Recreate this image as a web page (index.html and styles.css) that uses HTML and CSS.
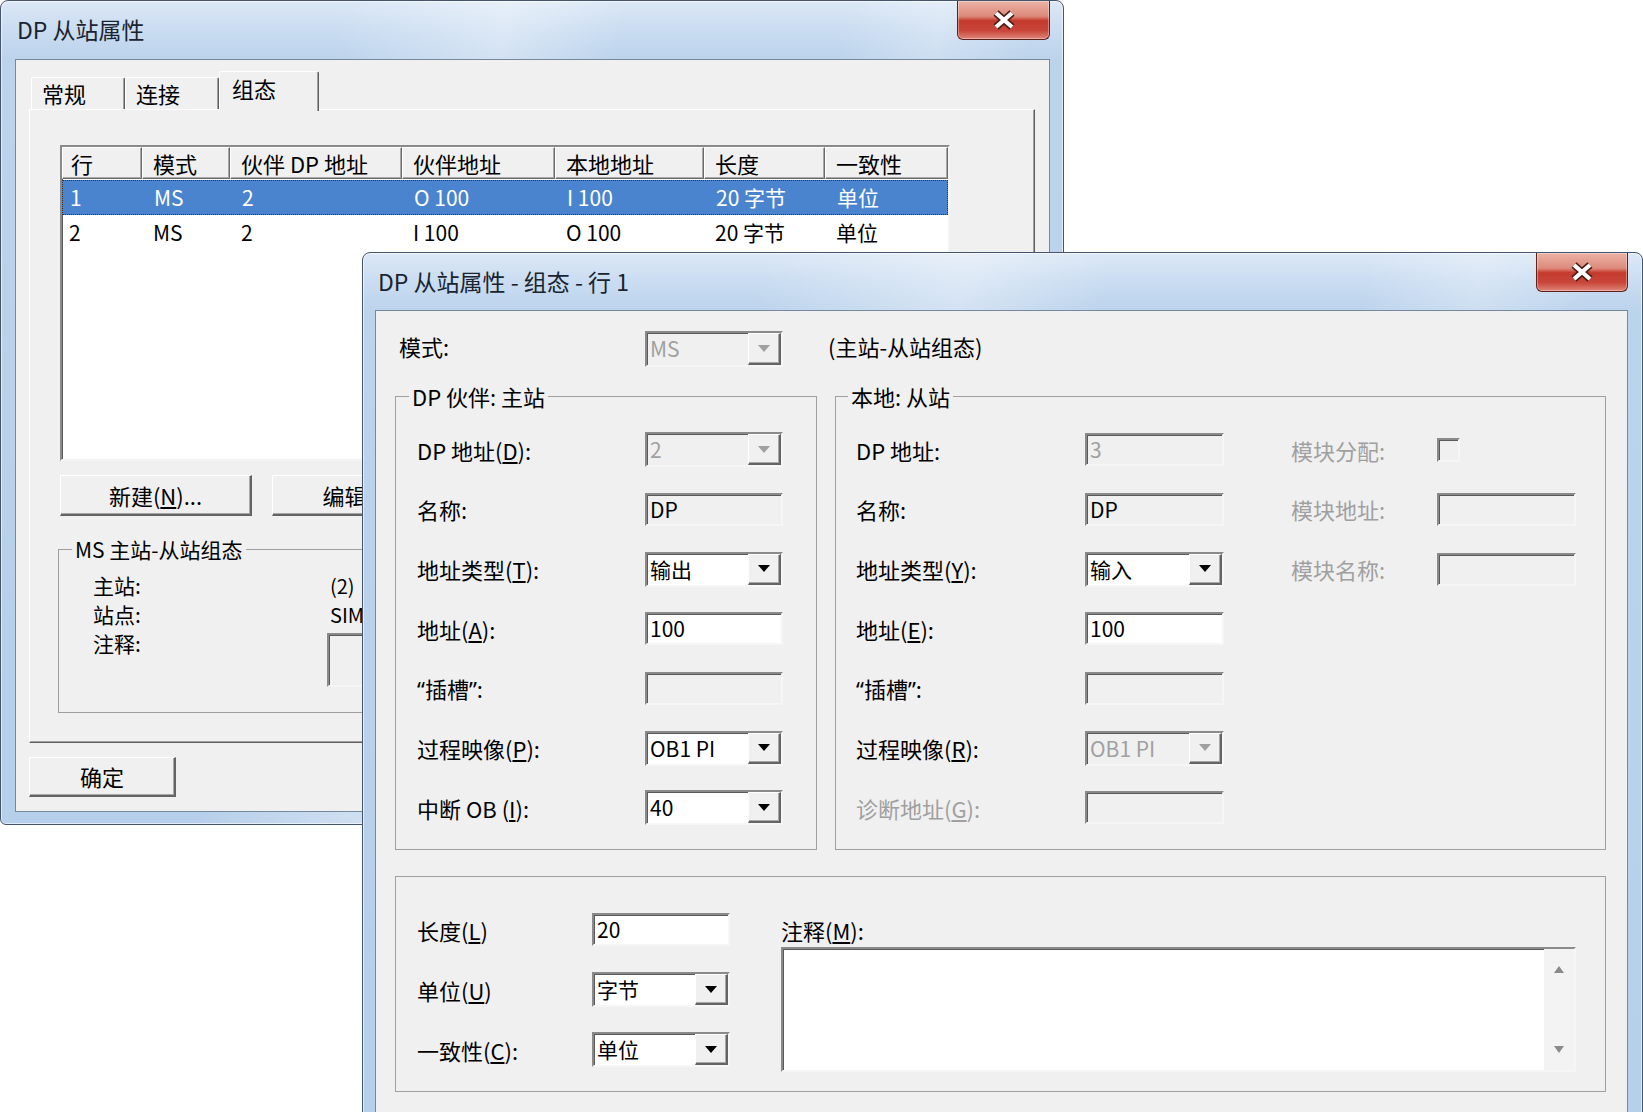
FILE: index.html
```html
<!DOCTYPE html>
<html lang="zh-CN">
<head>
<meta charset="utf-8">
<title>DP 从站属性</title>
<link rel="stylesheet" href="styles.css">
</head>
<body>
<div class="win win1">
  <div class="titlebar">
    <span class="title t1">DP 从站属性</span>
    <div class="close"><svg width="26" height="20" viewBox="0 0 26 20"><path d="M5 3 L21 17 M21 3 L5 17" stroke="#4a1d18" stroke-width="7.5" fill="none"/><path d="M5 3 L21 17 M21 3 L5 17" stroke="#ffffff" stroke-width="4.2" fill="none"/></svg></div>
  </div>
  <div class="client c1">
    <div class="tabs">
      <div class="tab">常规</div>
      <div class="tab">连接</div>
      <div class="tab active">组态</div>
    </div>
    <div class="tabpanel">
      <div class="list">
        <div class="lrow lhead">
          <div class="hc">行</div><div class="hc">模式</div><div class="hc">伙伴 DP 地址</div><div class="hc">伙伴地址</div><div class="hc">本地地址</div><div class="hc">长度</div><div class="hc">一致性</div>
        </div>
        <div class="lrow sel">
          <div class="lc">1</div><div class="lc">MS</div><div class="lc">2</div><div class="lc">O 100</div><div class="lc">I 100</div><div class="lc">20 字节</div><div class="lc">单位</div>
        </div>
        <div class="lrow">
          <div class="lc">2</div><div class="lc">MS</div><div class="lc">2</div><div class="lc">I 100</div><div class="lc">O 100</div><div class="lc">20 字节</div><div class="lc">单位</div>
        </div>
      </div>
      <div class="btnrow">
        <div class="btn wide">新建(<u>N</u>)...</div>
        <div class="btn wide">编辑(<u>E</u>)...</div>
        <div class="btn wide">删除(<u>D</u>)</div>
      </div>
      <fieldset class="grp grp-ms">
        <legend>MS 主站-从站组态</legend>
        <div class="msgrid">
          <span>主站:</span><span class="msval">(2)</span>
          <span>站点:</span><span class="msval">SIM</span>
          <span>注释:</span><div class="field dis note"></div>
        </div>
      </fieldset>
    </div>
    <div class="okrow"><div class="btn ok">确定</div></div>
  </div>
</div>

<div class="win win2">
  <div class="titlebar">
    <span class="title t2">DP 从站属性 - 组态 - 行 1</span>
    <div class="close"><svg width="26" height="20" viewBox="0 0 26 20"><path d="M5 3 L21 17 M21 3 L5 17" stroke="#4a1d18" stroke-width="7.5" fill="none"/><path d="M5 3 L21 17 M21 3 L5 17" stroke="#ffffff" stroke-width="4.2" fill="none"/></svg></div>
  </div>
  <div class="client c2">
    <div class="moderow">
      <span class="modelbl">模式:</span>
      <div class="combo dis"><span class="val">MS</span><span class="dd"><i class="tri"></i></span></div>
      <span class="modenote">(主站-从站组态)</span>
    </div>
    <div class="groups">
      <fieldset class="grp g1">
        <legend>DP 伙伴: 主站</legend>
        <div class="fgrid g1grid">
          <span class="lbl">DP 地址(<u>D</u>):</span>
          <div class="combo dis"><span class="val">2</span><span class="dd"><i class="tri"></i></span></div>
          <span class="lbl">名称:</span>
          <div class="field ro">DP</div>
          <span class="lbl">地址类型(<u>T</u>):</span>
          <div class="combo"><span class="val">输出</span><span class="dd"><i class="tri"></i></span></div>
          <span class="lbl">地址(<u>A</u>):</span>
          <div class="field">100</div>
          <span class="lbl"><span class="q">“</span>插槽<span class="q">”</span>:</span>
          <div class="field dis"></div>
          <span class="lbl">过程映像(<u>P</u>):</span>
          <div class="combo"><span class="val">OB1 PI</span><span class="dd"><i class="tri"></i></span></div>
          <span class="lbl">中断 OB (<u>I</u>):</span>
          <div class="combo"><span class="val">40</span><span class="dd"><i class="tri"></i></span></div>
        </div>
      </fieldset>
      <fieldset class="grp g2">
        <legend>本地: 从站</legend>
        <div class="fgrid g2grid">
          <span class="lbl">DP 地址:</span>
          <div class="field dis">3</div>
          <span class="lbl gray side">模块分配:</span>
          <div class="check"></div>

          <span class="lbl">名称:</span>
          <div class="field ro">DP</div>
          <span class="lbl gray side">模块地址:</span>
          <div class="field dis"></div>

          <span class="lbl">地址类型(<u>Y</u>):</span>
          <div class="combo"><span class="val">输入</span><span class="dd"><i class="tri"></i></span></div>
          <span class="lbl gray side">模块名称:</span>
          <div class="field dis"></div>

          <span class="lbl">地址(<u>E</u>):</span>
          <div class="field">100</div>
          <span></span><span></span>

          <span class="lbl"><span class="q">“</span>插槽<span class="q">”</span>:</span>
          <div class="field dis"></div>
          <span></span><span></span>

          <span class="lbl">过程映像(<u>R</u>):</span>
          <div class="combo dis"><span class="val">OB1 PI</span><span class="dd"><i class="tri"></i></span></div>
          <span></span><span></span>

          <span class="lbl gray">诊断地址(<u>G</u>):</span>
          <div class="field dis"></div>
          <span></span><span></span>
        </div>
      </fieldset>
    </div>
    <div class="grp3">
      <span class="lbl r1">长度(<u>L</u>)</span>
      <div class="field r1c">20</div>
      <span class="lbl r2">单位(<u>U</u>)</span>
      <div class="combo r2c"><span class="val">字节</span><span class="dd"><i class="tri"></i></span></div>
      <span class="lbl r3">一致性(<u>C</u>):</span>
      <div class="combo r3c"><span class="val">单位</span><span class="dd"><i class="tri"></i></span></div>
      <div class="notecol">
        <span class="notelbl">注释(<u>M</u>):</span>
        <div class="ta"><div class="sb"><i class="sup"></i><i class="sdn"></i></div></div>
      </div>
    </div>
  </div>
</div>
</body>
</html>
```

FILE: styles.css
```css
html, body {
  margin: 0;
  padding: 0;
  width: 1643px;
  height: 1112px;
  overflow: hidden;
  background: #ffffff;
}
body {
  position: relative;
  font-family: "Noto Sans CJK SC", "Noto Sans", sans-serif;
  font-size: 22px;
  line-height: 1.2;
  color: #000;
}
u { text-decoration: underline; text-underline-offset: 2px; }
.q { font-family: "Noto Sans", "DejaVu Sans", sans-serif; }

/* ---------- windows ---------- */
.win {
  position: absolute;
  box-sizing: border-box;
  border: 1px solid #44546a;
  border-radius: 8px 8px 6px 6px;
  background:
    linear-gradient(100deg, rgba(255,255,255,0) 28%, rgba(255,255,255,.35) 42%, rgba(255,255,255,0) 52%, rgba(255,255,255,0) 70%, rgba(255,255,255,.25) 78%, rgba(255,255,255,0) 86%),
    linear-gradient(180deg, #dce8f6 0, #c9dcf1 30px, #bcd3ec 58px, #b6cfea 100%);
  box-shadow: inset 0 0 0 1px rgba(255,255,255,.6);
  display: flex;
  flex-direction: column;
}
.win1 { left: 0; top: 0; width: 1064px; height: 825px; padding: 0 13px 12px 14px; z-index: 1; }
.win2 { left: 362px; top: 252px; width: 1281px; height: 900px; padding: 0 14px 0 12px; z-index: 2; }

.titlebar { height: 58px; flex: none; display: flex; }
.win2 .titlebar { height: 57px; }
.title {
  align-self: center;
  font-size: 23px;
  color: #1a2430;
  white-space: nowrap;
}
.t1 { margin-left: 2px; margin-top: -1px; }
.t2 { margin-left: 3px; margin-top: 1px; }

.close {
  margin-left: auto;
  align-self: flex-start;
  width: 93px;
  height: 39px;
  box-sizing: border-box;
  border: 1px solid #5e2019;
  border-top: none;
  border-radius: 0 0 6px 6px;
  background: linear-gradient(180deg, #eab3a6 0%, #dd8a7b 40%, #c43a2c 52%, #c9463a 78%, #e0857a 100%);
  box-shadow: inset 0 0 0 1px rgba(255,255,255,.35);
  display: flex;
  align-items: center;
  justify-content: center;
}
.win2 .close { width: 92px; }

.client {
  flex: 1;
  box-sizing: border-box;
  background: #f0f0f0;
  border: 1px solid #76889c;
  display: flex;
  flex-direction: column;
  overflow: hidden;
}

/* ---------- dialog 1 ---------- */
.c1 { padding: 11px 0 0 15px; }
.tabs {
  height: 38px;
  display: flex;
  align-items: flex-end;
  flex: none;
}
.tab {
  box-sizing: border-box;
  height: 32px;
  width: 94px;
  padding-left: 10px;
  background: #f0f0f0;
  border-top: 1px solid #fff;
  border-left: 1px solid #fff;
  border-right: 1px solid #5f5f5f;
  border-radius: 2px 2px 0 0;
  box-shadow: inset -1px 0 0 #a0a0a0;
  display: flex;
  align-items: center;
  font-size: 22px;
}
.tab.active {
  height: 40px;
  width: 100px;
  margin-bottom: -2px;
  padding-left: 12px;
  padding-bottom: 6px;
  position: relative;
  z-index: 2;
}
.tabpanel {
  box-sizing: border-box;
  margin-left: -2px;
  width: 1006px;
  height: 634px;
  flex: none;
  border-top: 1px solid #fff;
  border-left: 1px solid #fff;
  border-right: 1px solid #5f5f5f;
  border-bottom: 1px solid #5f5f5f;
  box-shadow: inset -1px -1px 0 #a0a0a0;
  padding: 35px 0 0 30px;
  position: relative;
  z-index: 1;
}
.list {
  box-sizing: border-box;
  width: 890px;
  height: 316px;
  background: #fff;
  border: 2px solid;
  border-color: #8a8a8a #f4f4f4 #f4f4f4 #8a8a8a;
  box-shadow: inset 1px 1px 0 #5a5a5a;
}
.lrow {
  display: grid;
  grid-template-columns: 80px 88px 172px 153px 149px 121px 123px;
  height: 35px;
  align-items: center;
}
.lhead { height: 32px; margin-bottom: 1px; }
.hc {
  box-sizing: border-box;
  height: 32px;
  background: #f0f0f0;
  border-top: 1px solid #fff;
  border-left: 1px solid #fff;
  border-right: 1px solid #6a6a6a;
  border-bottom: 1px solid #6a6a6a;
  box-shadow: inset -1px -1px 0 #a8a8a8;
  padding-left: 10px;
  display: flex;
  align-items: center;
  white-space: nowrap;
}
.hc:first-child { padding-left: 8px; }
.lc { padding-left: 11px; white-space: nowrap; font-size: 21px; }
.lc:first-child { padding-left: 7px; }
.lrow.sel {
  background: #4a84cf;
  color: #fff;
  box-sizing: border-box;
  border: 1px dotted #4a2c1a;
}

.btnrow {
  margin-top: 14px;
  display: flex;
  gap: 20px;
}
.btn {
  box-sizing: border-box;
  background: #f0f0f0;
  border-top: 1px solid #fff;
  border-left: 1px solid #fff;
  border-right: 2px solid #646464;
  border-bottom: 2px solid #646464;
  box-shadow: inset -1px -1px 0 #a8a8a8;
  display: flex;
  align-items: center;
  justify-content: center;
  white-space: nowrap;
}
.btn.wide { width: 192px; height: 41px; flex: none; }
.okrow { margin-top: 14px; margin-left: -2px; }
.btn.ok { width: 147px; height: 40px; }

.grp {
  margin: 0;
  padding: 0;
  border: 1px solid #a0a0a0;
  min-width: 0;
}
.grp legend {
  padding: 0 3px;
  margin-left: 12px;
  line-height: 24px;
  font-size: 21px;
  white-space: nowrap;
}
.grp-ms {
  margin-top: 21px;
  margin-left: -2px;
  width: 890px;
  box-sizing: border-box;
  height: 176px;
}
.grp-ms legend { margin-left: 13px; }
.msgrid {
  padding: 10px 0 0 34px;
  display: grid;
  grid-template-columns: 234px auto;
  grid-auto-rows: 29px;
  align-items: center;
  font-size: 21px;
}
.msval { padding-left: 3px; font-size: 20px; white-space: nowrap; }
.field.note { height: 54px; width: 300px; align-self: start; margin-top: 4px; }

/* ---------- controls ---------- */
.field {
  box-sizing: border-box;
  height: 33px;
  border: 2px solid;
  border-color: #8a8a8a #f6f6f6 #f6f6f6 #8a8a8a;
  box-shadow: inset 1px 1px 0 #5a5a5a;
  background: #fff;
  display: flex;
  align-items: center;
  padding-left: 3px;
  font-size: 21px;
  white-space: nowrap;
}
.field.ro { background: #f0f0f0; }
.field.dis { background: #f0f0f0; color: #a0a0a0; }
.combo {
  box-sizing: border-box;
  height: 35px;
  border: 2px solid;
  border-color: #8a8a8a #f6f6f6 #f6f6f6 #8a8a8a;
  box-shadow: inset 1px 1px 0 #5a5a5a;
  background: #fff;
  display: flex;
  align-items: stretch;
  font-size: 21px;
}
.combo.dis { background: #f0f0f0; color: #a0a0a0; }
.combo .val { flex: 1; padding-left: 3px; display: flex; align-items: center; white-space: nowrap; }
.combo .dd {
  box-sizing: border-box;
  width: 33px;
  flex: none;
  background: #f0f0f0;
  border-top: 1px solid #fff;
  border-left: 1px solid #fff;
  border-right: 2px solid #646464;
  border-bottom: 2px solid #646464;
  box-shadow: inset -1px -1px 0 #a8a8a8;
  display: flex;
  align-items: center;
  justify-content: center;
}
.tri {
  display: block;
  width: 0;
  height: 0;
  border-left: 6px solid transparent;
  border-right: 6px solid transparent;
  border-top: 7px solid #000;
}
.combo.dis .tri { border-top-color: #a0a0a0; }
.check {
  box-sizing: border-box;
  width: 23px;
  height: 24px;
  border: 2px solid;
  border-color: #8a8a8a #f6f6f6 #f6f6f6 #8a8a8a;
  box-shadow: inset 1px 1px 0 #5a5a5a;
  background: #f0f0f0;
  justify-self: start;
}

/* ---------- dialog 2 ---------- */
.c2 { padding: 20px 21px 0 19px; }
.moderow {
  height: 36px;
  display: flex;
  align-items: center;
  flex: none;
}
.modelbl { width: 246px; padding-left: 4px; padding-bottom: 5px; font-size: 22px; }
.moderow .combo { width: 138px; height: 36px; }
.modenote { margin-left: 45px; padding-bottom: 5px; font-size: 22px; }

.groups {
  margin-top: 17px;
  display: flex;
  gap: 18px;
  flex: none;
}
.grp.g1 { width: 422px; box-sizing: border-box; }
.grp.g1 legend { margin-left: 13px; font-size: 22px; }
.grp.g2 { width: 771px; box-sizing: border-box; }
.grp.g2 legend { margin-left: 12px; font-size: 22px; }
.fgrid {
  display: grid;
  grid-auto-rows: 59.7px;
  align-items: center;
  padding: 12px 0 11px 21px;
}
.g1grid { grid-template-columns: 228px 138px; }
.g2grid { grid-template-columns: 229px 139px 213px 139px; padding-left: 20px; }
.lbl { font-size: 22px; white-space: nowrap; }
.lbl.gray { color: #a0a0a0; }
.lbl.side { padding-left: 67px; }

.grp3 {
  margin-top: 26px;
  box-sizing: border-box;
  width: 1211px;
  border: 1px solid #a0a0a0;
  padding: 23px 0 11px 21px;
  display: grid;
  grid-template-columns: 175px 138px 51px 795px;
  grid-template-rows: 60px 60px 60px;
  align-items: center;
  flex: none;
}
.r1 { grid-column: 1; grid-row: 1; }
.r2 { grid-column: 1; grid-row: 2; }
.r3 { grid-column: 1; grid-row: 3; }
.r1c { grid-column: 2; grid-row: 1; }
.r2c { grid-column: 2; grid-row: 2; }
.r3c { grid-column: 2; grid-row: 3; }
.notecol {
  grid-column: 4;
  grid-row: 1 / span 3;
  align-self: start;
  display: flex;
  flex-direction: column;
}
.notelbl { height: 47px; box-sizing: border-box; padding-top: 17px; line-height: 26px; font-size: 22px; }
.ta {
  box-sizing: border-box;
  height: 125px;
  border: 2px solid;
  border-color: #8a8a8a #f6f6f6 #f6f6f6 #8a8a8a;
  box-shadow: inset 1px 1px 0 #5a5a5a;
  background: #fff;
  display: flex;
  justify-content: flex-end;
}
.sb {
  width: 30px;
  background: #f3f3f3;
  display: flex;
  flex-direction: column;
  justify-content: space-between;
  align-items: center;
  padding: 17px 0 17px;
}
.sup {
  display: block;
  width: 0; height: 0;
  border-left: 5px solid transparent;
  border-right: 5px solid transparent;
  border-bottom: 7px solid #8a8a8a;
}
.sdn {
  display: block;
  width: 0; height: 0;
  border-left: 5px solid transparent;
  border-right: 5px solid transparent;
  border-top: 7px solid #8a8a8a;
}
```
